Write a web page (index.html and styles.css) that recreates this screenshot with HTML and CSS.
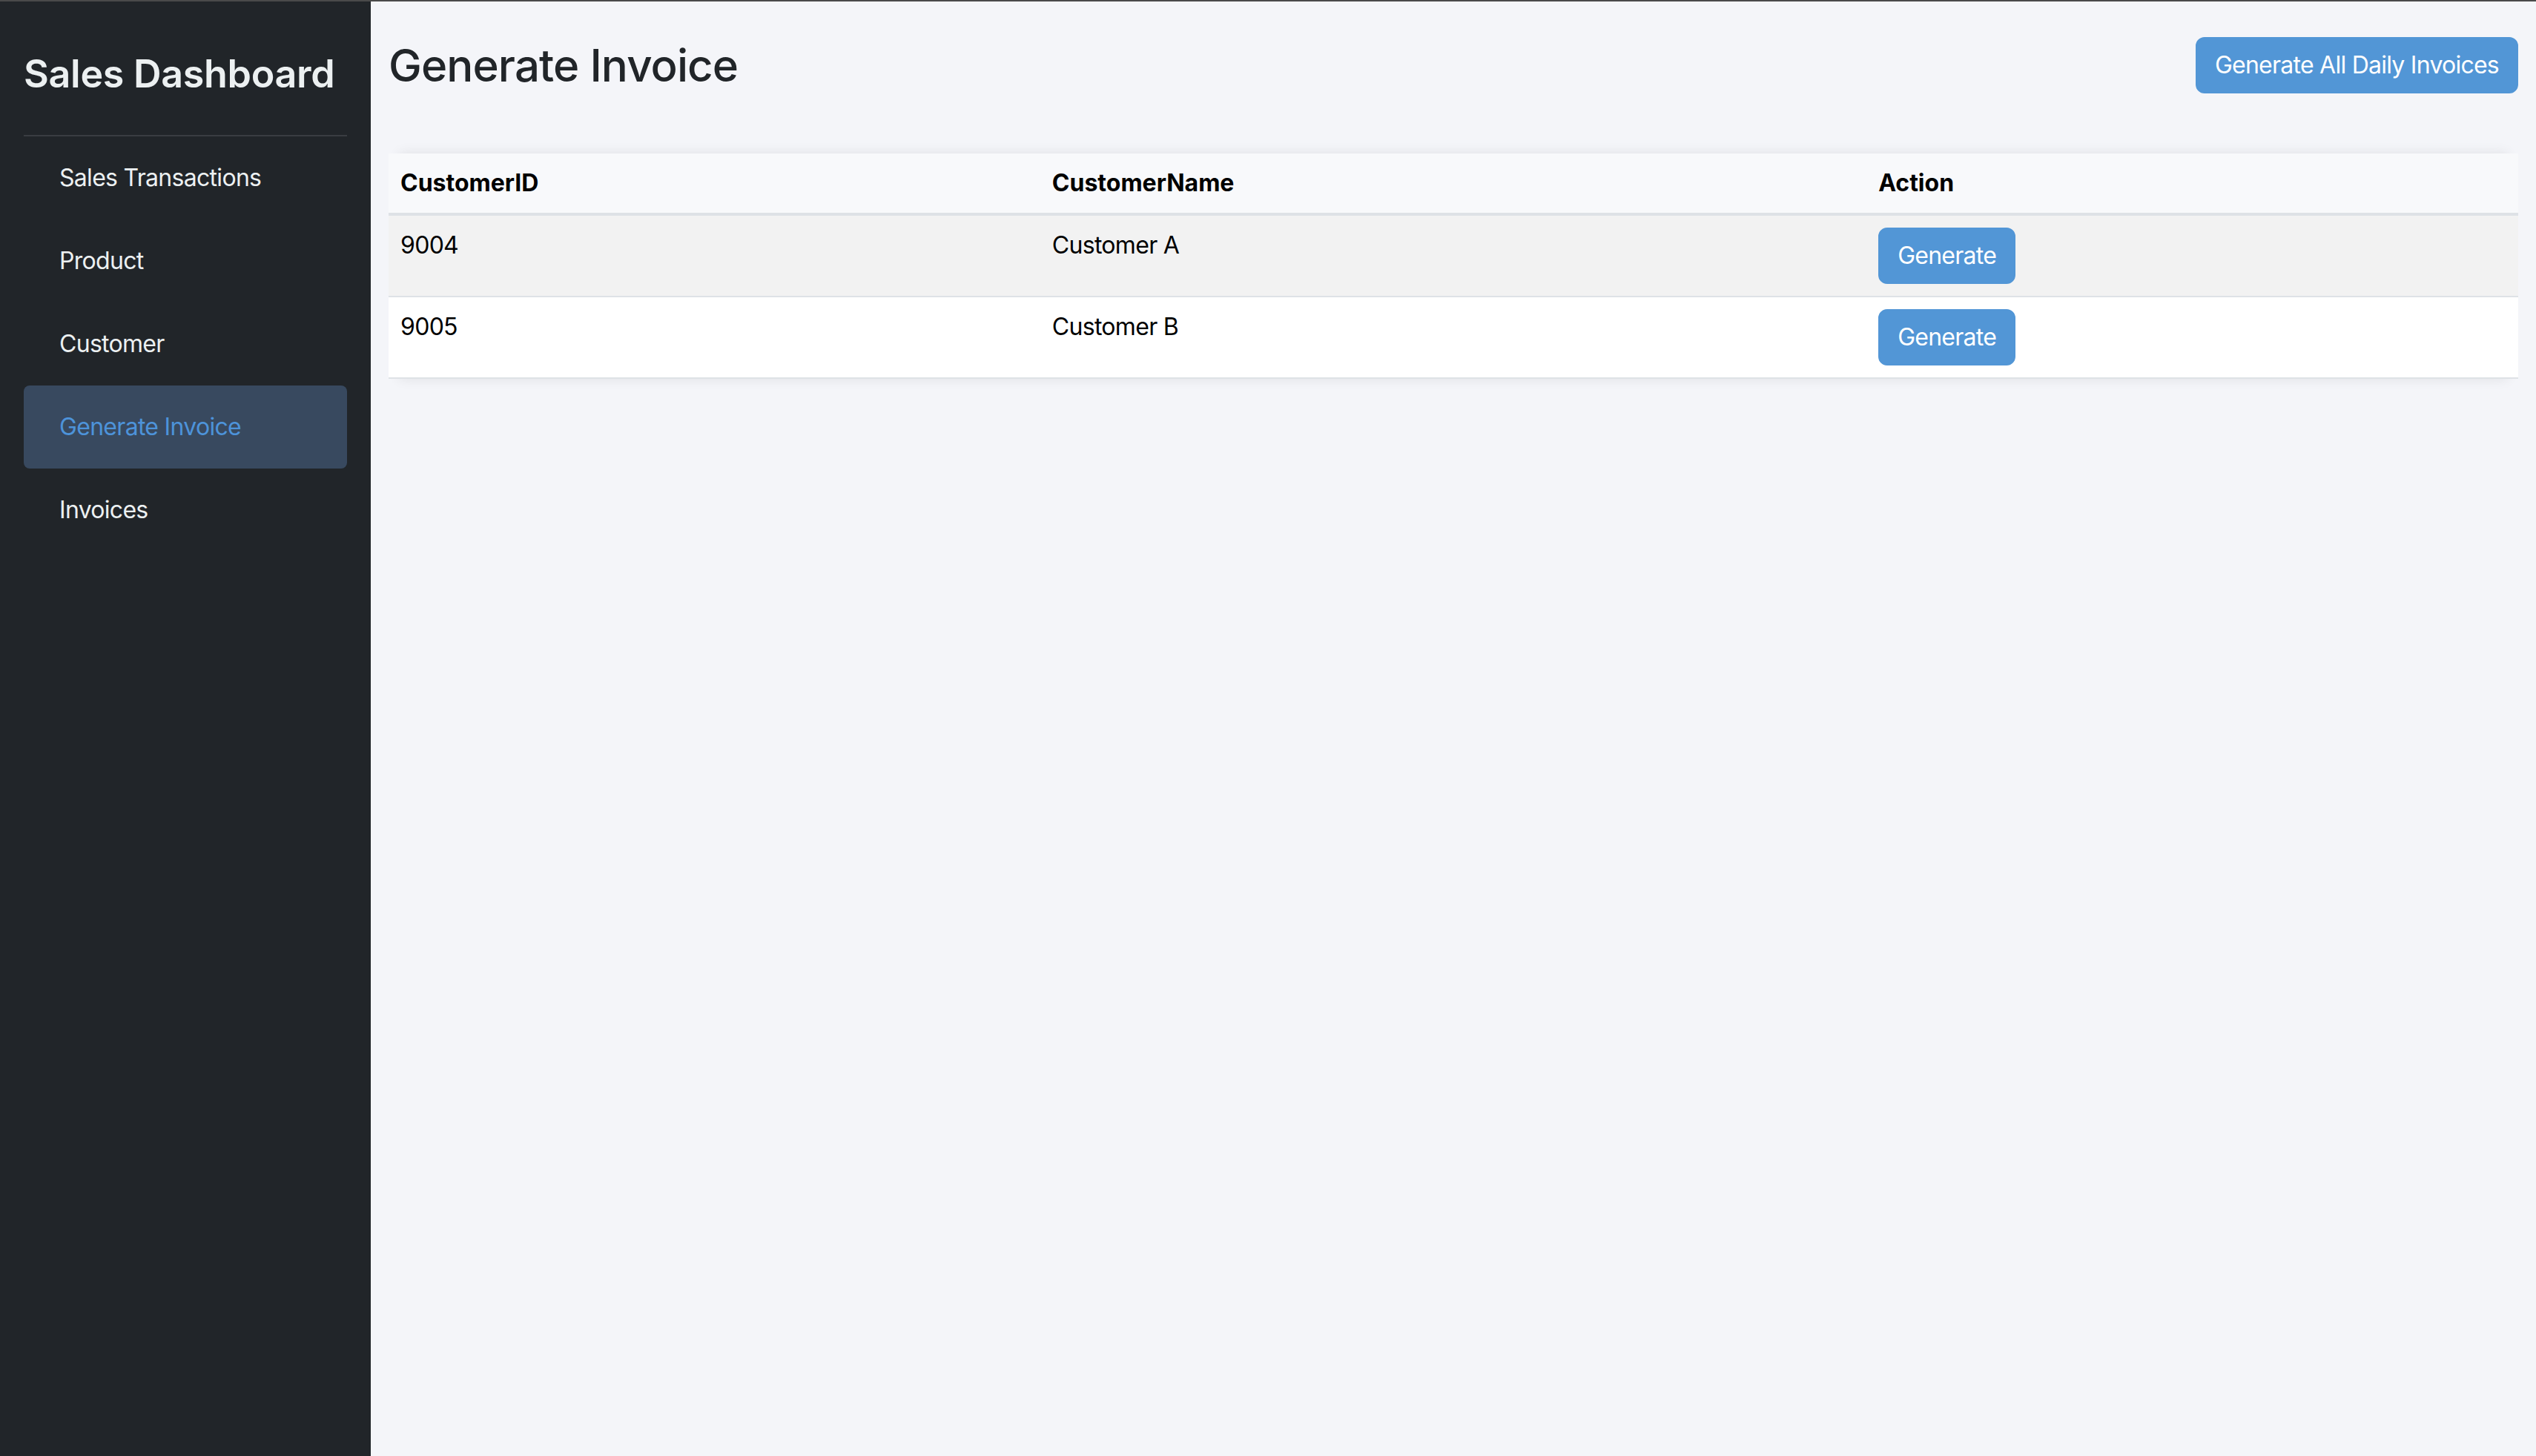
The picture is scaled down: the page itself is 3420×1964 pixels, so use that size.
FILE: index.html
```html
<!DOCTYPE html>
<html lang="en">
<head>
  <meta charset="UTF-8">
  <title>Generate Invoice - Sales Dashboard</title>
  <link rel="stylesheet" href="styles.css">
</head>
<body>
  <!-- Sidebar navigation -->
  <aside class="sidebar">
    <h2 class="brand">Sales Dashboard</h2>
    <nav class="nav">
      <a href="#" class="nav-link">Sales Transactions</a>
      <a href="#" class="nav-link">Product</a>
      <a href="#" class="nav-link">Customer</a>
      <a href="#" class="nav-link active">Generate Invoice</a>
      <a href="#" class="nav-link">Invoices</a>
    </nav>
  </aside>

  <!-- Main content -->
  <main class="content">
    <div class="page-header">
      <h1>Generate Invoice</h1>
      <button class="btn">Generate All Daily Invoices</button>
    </div>

    <table class="invoice-table">
      <thead>
        <tr>
          <th class="col-id">CustomerID</th>
          <th class="col-name">CustomerName</th>
          <th>Action</th>
        </tr>
      </thead>
      <tbody>
        <tr>
          <td>9004</td>
          <td>Customer A</td>
          <td><button class="btn">Generate</button></td>
        </tr>
        <tr>
          <td>9005</td>
          <td>Customer B</td>
          <td><button class="btn">Generate</button></td>
        </tr>
      </tbody>
    </table>
  </main>
</body>
</html>
```

FILE: styles.css
```css
* {
  box-sizing: border-box;
}

body {
  font-family: 'Inter', 'Liberation Sans', sans-serif;
  font-size: 32px;
  line-height: 48px;
  letter-spacing: -0.7px;
  margin: 0;
  min-height: 100vh;
  display: flex;
  border-top: 2px solid #4a4a4a;
  background-color: #f4f5f9;
  color: #212529;
}

/* Sidebar */
.sidebar {
  width: 500px;
  flex-shrink: 0;
  background-color: #212529;
  padding: 32px;
}

.brand {
  margin: 0;
  padding: 37px 0 53px;
  font-size: 52px;
  line-height: 58px;
  font-weight: 600;
  letter-spacing: -0.3px;
  color: #ecf0f1;
  border-bottom: 2px solid #3a3d42;
}

.nav {
  display: flex;
  flex-direction: column;
}

.nav-link {
  display: block;
  padding: 32px 48px;
  color: #ecf0f1;
  text-decoration: none;
  border-radius: 8px;
}

.nav-link.active {
  background-color: #38495f;
  color: #4d93da;
}

/* Main area */
.content {
  flex: 1;
  padding: 48px 24px;
}

.page-header {
  display: flex;
  justify-content: space-between;
  align-items: center;
  margin-bottom: 81px;
}

.page-header h1 {
  margin: 0;
  font-size: 60px;
  line-height: 72px;
  font-weight: 500;
  letter-spacing: -0.9px;
  color: #212529;
}

.btn {
  font-family: inherit;
  font-size: 32px;
  line-height: 48px;
  letter-spacing: -0.75px;
  padding: 12px 24px;
  border: 2px solid #5296d6;
  border-radius: 12px;
  background-color: #5296d6;
  color: #ffffff;
  cursor: pointer;
}

/* Table */
.invoice-table {
  width: 100%;
  border-collapse: collapse;
  background-color: #ffffff;
  color: #000000;
  box-shadow: 0 -14px 16px -14px rgba(0, 0, 0, 0.09), 0 14px 16px -14px rgba(0, 0, 0, 0.09);
}

.invoice-table th,
.invoice-table td {
  padding: 16px;
  text-align: left;
  vertical-align: top;
}

.invoice-table th {
  font-weight: 700;
  letter-spacing: 0;
  background-color: #f8f9fb;
  border-bottom: 4px solid #dee2e6;
}

.invoice-table td {
  border-bottom: 2px solid #dee2e6;
}

.invoice-table .col-id {
  width: 30.6%;
}

.invoice-table .col-name {
  width: 38.8%;
}

.invoice-table tbody tr:nth-child(odd) td {
  background-color: #f2f2f2;
}
```
